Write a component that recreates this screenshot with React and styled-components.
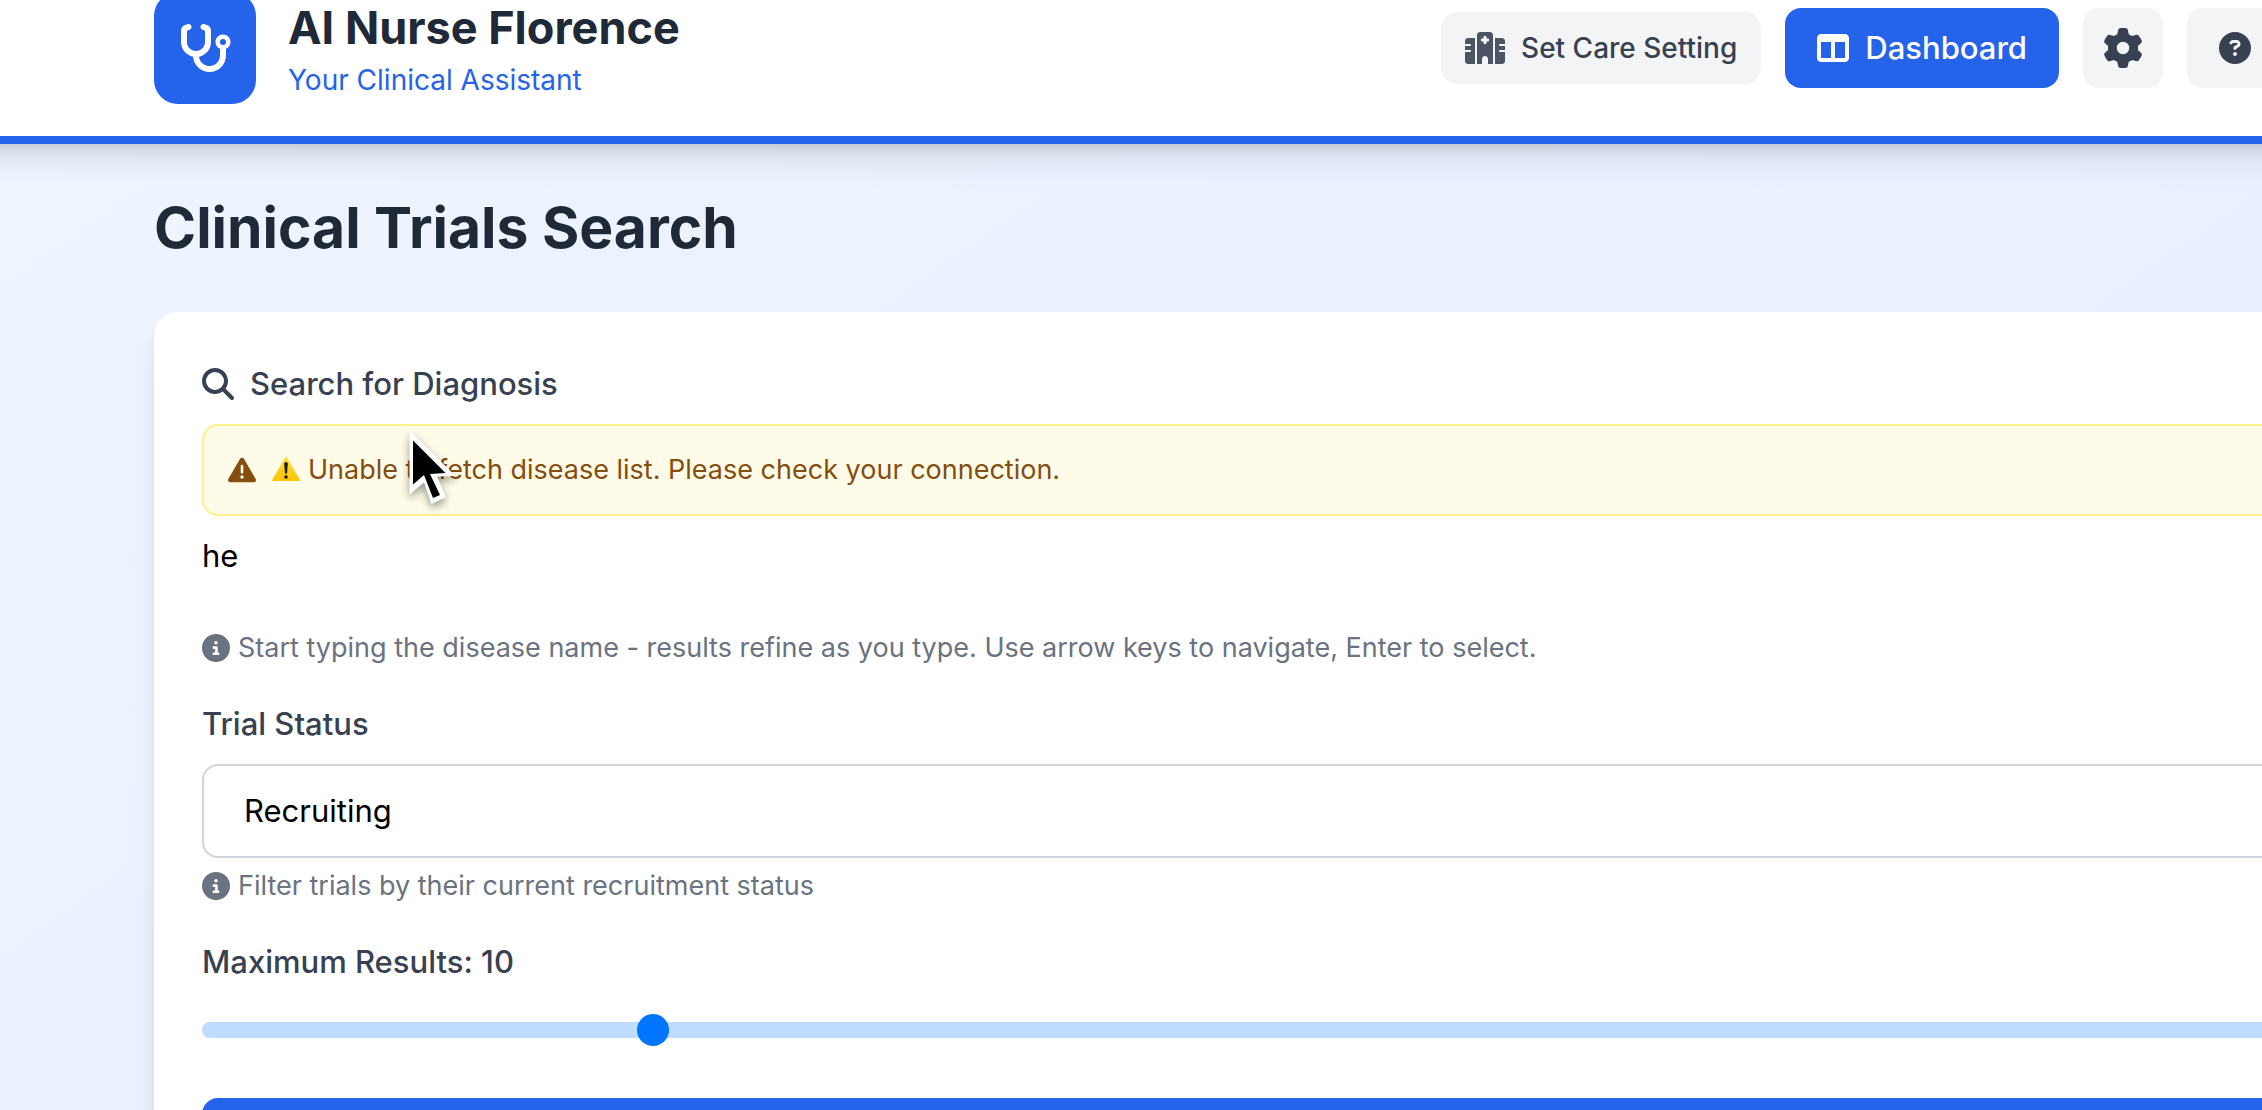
import React, { useState } from "react";
import styled, { createGlobalStyle } from "styled-components";
import {
  FaStethoscope,
  FaHospital,
  FaTableColumns,
  FaGear,
  FaCircleQuestion,
  FaTriangleExclamation,
  FaCircleInfo,
  FaMagnifyingGlass,
} from "react-icons/fa6";

const GlobalStyle = createGlobalStyle`
  *, *::before, *::after { box-sizing: border-box; }
  body {
    margin: 0;
    font-family: Inter, "Liberation Sans", sans-serif;
    font-size: 31px;
    line-height: 48px;
    color: #1f2937;
  }
  h1, p { margin: 0; }
  button, input, select { font: inherit; }
  svg { display: block; flex: none; }
`;

const Shell = styled.div`
  height: 100vh;
  overflow: hidden;
  position: relative;
`;

const Canvas = styled.div`
  width: calc(100% + 762px);
  min-height: 200vh;
  margin-left: -110px;
  background: linear-gradient(to bottom right, #eff6ff, #e0e7ff);
`;

const Header = styled.header`
  height: 144px;
  border-bottom: 8px solid #2563eb;
  background: #fff;
  box-shadow: 0 20px 30px -6px rgba(0, 0, 0, 0.1), 0 8px 12px -4px rgba(0, 0, 0, 0.1);
`;

const HeaderRow = styled.div`
  display: flex;
  align-items: center;
  justify-content: space-between;
  width: calc(100vw + 110px);
  height: 96px;
  padding-left: 264px;
`;

const Brand = styled.div`
  display: flex;
  align-items: center;
  gap: 32px;
`;

const Logo = styled.div`
  display: flex;
  align-items: center;
  justify-content: center;
  width: 102px;
  height: 112px;
  border-radius: 24px;
  background: #2563eb;
  color: #fff;

  svg {
    width: 54px;
    height: 48px;
  }
`;

const BrandName = styled.p`
  font-size: 45px;
  font-weight: 700;
  line-height: 64px;
`;

const Tagline = styled.p`
  font-size: 28px;
  line-height: 40px;
  color: #2563eb;
`;

const Actions = styled.nav`
  display: flex;
  align-items: center;
  gap: 24px;
  margin-right: -37px;
`;

const ActionButton = styled.button`
  display: flex;
  align-items: center;
  gap: 16px;
  height: ${(p) => (p.$small ? 72 : 80)}px;
  padding: 0 ${(p) => p.$pad || 32}px;
  border: 0;
  border-radius: 16px;
  background: ${(p) => (p.$primary ? "#2563eb" : "#f3f4f6")};
  color: ${(p) => (p.$primary ? "#fff" : "#374151")};
  font-size: ${(p) => (p.$small ? 28 : 31)}px;
  font-weight: 500;
  white-space: nowrap;
`;

const HelpButton = styled(ActionButton)`
  width: 112px;
`;

const HospitalIcon = styled(FaHospital)`
  width: 40px;
  height: 32px;
  color: #4b5563;
`;

const Main = styled.main`
  padding: 48px 264px;
`;

const PageTitle = styled.h1`
  margin-bottom: 48px;
  font-size: 57px;
  font-weight: 700;
  line-height: 72px;
`;

const Card = styled.form`
  padding: 48px;
  border-radius: 24px;
  background: #fff;
  box-shadow: 0 20px 30px -6px rgba(0, 0, 0, 0.1), 0 8px 12px -4px rgba(0, 0, 0, 0.1);
`;

const Field = styled.div`
  margin-bottom: 32px;
`;

const Label = styled.label`
  display: flex;
  align-items: center;
  gap: 16px;
  margin-bottom: 16px;
  font-weight: 500;
  color: #374151;
`;

const Alert = styled.div`
  display: flex;
  align-items: center;
  gap: 16px;
  margin-bottom: 16px;
  padding: 24px;
  border: 2px solid #fef08a;
  border-radius: 16px;
  background: #fefce8;
  color: #854d0e;
  font-size: 27px;
  line-height: 40px;
`;

const AlertText = styled.span`
  display: flex;
  align-items: center;
  gap: 8px;
`;

const PlainInput = styled.input`
  display: block;
  width: 100%;
  height: 48px;
  margin-bottom: 48px;
  padding: 0;
  border: 0;
  outline: 0;
  background: transparent;
  color: #000;
`;

const Hint = styled.p`
  display: flex;
  align-items: center;
  gap: 8px;
  font-size: 27px;
  line-height: 40px;
  color: #6b7280;
`;

const Select = styled.select`
  display: block;
  width: 100%;
  height: 94px;
  margin-bottom: 8px;
  padding: 0 40px;
  border: 2px solid #d1d5db;
  border-radius: 16px;
  appearance: none;
  background: #fff;
  color: #000;
`;

const Slider = styled.input`
  display: block;
  width: 100%;
  height: 16px;
  margin: 36px 0 60px;
  border-radius: 8px;
  appearance: none;
  background: #bfdbfe;

  &::-webkit-slider-thumb {
    appearance: none;
    width: 32px;
    height: 32px;
    border-radius: 50%;
    background: #0075ff;
  }
`;

const SubmitButton = styled.button`
  display: block;
  width: 100%;
  height: 96px;
  border: 0;
  border-radius: 16px;
  background: #2563eb;
`;

const Pointer = styled.svg`
  position: absolute;
  left: 400px;
  top: 424px;
  pointer-events: none;
  filter: drop-shadow(0 4px 4px rgba(0, 0, 0, 0.4));
`;

function WarningSign() {
  return (
    <svg width="28" height="28" viewBox="0 0 28 28" role="img" aria-label="Warning">
      <defs>
        <linearGradient id="sign" x1="0" y1="0" x2="0" y2="1">
          <stop offset="0" stopColor="#ffe04a" />
          <stop offset="1" stopColor="#ffc400" />
        </linearGradient>
      </defs>
      <path d="M14 1.500 27 24.200H1Z" fill="url(#sign)" stroke="url(#sign)" strokeWidth="1.600" strokeLinejoin="round" />
      <path d="M12.200 7.800a1.800 1.800 0 0 1 3.600 0L15 17.600h-2Z" fill="#1f1a00" />
      <circle cx="14" cy="21" r="1.800" fill="#1f1a00" />
    </svg>
  );
}

export default function App() {
  const [query, setQuery] = useState("he");
  const [status, setStatus] = useState("Recruiting");
  const [max, setMax] = useState(10);

  return (
    <>
      <GlobalStyle />
      <Shell>
        <Canvas>
          <Header>
            <HeaderRow>
              <Brand>
                <Logo>
                  <FaStethoscope />
                </Logo>
                <div>
                  <BrandName>AI Nurse Florence</BrandName>
                  <Tagline>Your Clinical Assistant</Tagline>
                </div>
              </Brand>
              <Actions>
                <ActionButton type="button" $small $pad={24}>
                  <HospitalIcon />
                  Set Care Setting
                </ActionButton>
                <ActionButton type="button" $primary>
                  <FaTableColumns size={32} />
                  Dashboard
                </ActionButton>
                <ActionButton type="button" $pad={20} aria-label="Settings">
                  <FaGear size={40} />
                </ActionButton>
                <HelpButton type="button" aria-label="Help">
                  <FaCircleQuestion size={32} />
                </HelpButton>
              </Actions>
            </HeaderRow>
          </Header>
          <Main>
            <PageTitle>Clinical Trials Search</PageTitle>
            <Card onSubmit={(e) => e.preventDefault()}>
              <Field>
                <Label htmlFor="diagnosis">
                  <FaMagnifyingGlass size={32} />
                  Search for Diagnosis
                </Label>
                <Alert role="alert">
                  <FaTriangleExclamation size={28} />
                  <AlertText>
                    <WarningSign />
                    Unable to fetch disease list. Please check your connection.
                  </AlertText>
                </Alert>
                <PlainInput id="diagnosis" value={query} onChange={(e) => setQuery(e.target.value)} />
                <Hint>
                  <FaCircleInfo size={28} />
                  Start typing the disease name - results refine as you type. Use arrow keys to navigate, Enter to select.
                </Hint>
              </Field>
              <Field>
                <Label htmlFor="status">Trial Status</Label>
                <Select id="status" value={status} onChange={(e) => setStatus(e.target.value)}>
                  <option>Recruiting</option>
                </Select>
                <Hint>
                  <FaCircleInfo size={28} />
                  Filter trials by their current recruitment status
                </Hint>
              </Field>
              <Label htmlFor="max">Maximum Results: {max}</Label>
              <Slider
                id="max"
                type="range"
                min="1"
                max="50"
                value={max}
                onChange={(e) => setMax(Number(e.target.value))}
              />
              <SubmitButton type="submit" aria-label="Search" />
            </Card>
          </Main>
        </Canvas>
        <Pointer width="64" height="88" viewBox="0 0 64 88" aria-hidden="true">
          <path d="M9.500 6.500V70.500L24 58.500L31.500 80L46 73L37 52.500L55.500 52Z" fill="#fff" />
          <path d="M13 16.500V60.500L24 51L33 74L40 71L30 50L45.500 49Z" fill="#000" />
        </Pointer>
      </Shell>
    </>
  );
}
